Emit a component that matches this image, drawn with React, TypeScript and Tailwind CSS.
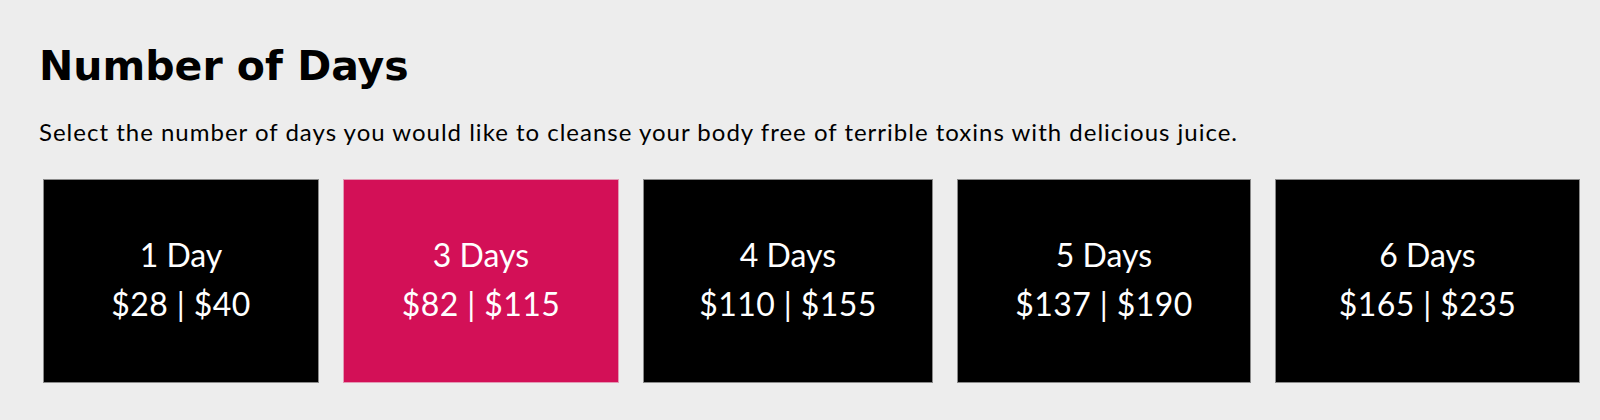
const options = [
    { label: '1 Day', price: '$28 | $40', width: 'w-[276px]' },
    { label: '3 Days', price: '$82 | $115', width: 'w-[276px]' },
    { label: '4 Days', price: '$110 | $155', width: 'w-[290px]' },
    { label: '5 Days', price: '$137 | $190', width: 'w-[294px]' },
    { label: '6 Days', price: '$165 | $235', width: 'w-[305px]' },
];

export default function App() {
    const selected = 1;

    return (
        <div className="w-full h-[420px] bg-[#ededed] pl-[39px] pr-[20px] pt-[42px] font-['Lato','Open_Sans',sans-serif] text-black">
            {/* Titulo */}
            <h1 className="text-[41px] leading-[48px] font-bold font-['DejaVu_Sans','Lato',sans-serif]">
                Number of Days
            </h1>

            <p className="mt-[27px] text-[24px] leading-[30px] tracking-[1px]">
                Select the number of days you would like to cleanse your body free of terrible toxins with delicious juice.
            </p>

            {/* Opcoes */}
            <div className="mt-[32px] pl-[4px] flex gap-[24px]">
                {options.map((o, i) => (
                    <button
                        key={o.label}
                        className={`${o.width} shrink-0 h-[204px] pb-[4px] flex flex-col items-center justify-center border text-white text-[32px] leading-[49px] ${i === selected ? 'bg-[#d31057] border-[#e39ab5]' : 'bg-black border-[#8a8a8a]'}`}
                    >
                        <span>{o.label}</span>
                        <span className="tracking-[0.4px]">{o.price}</span>
                    </button>
                ))}
            </div>
        </div>
    );
}
